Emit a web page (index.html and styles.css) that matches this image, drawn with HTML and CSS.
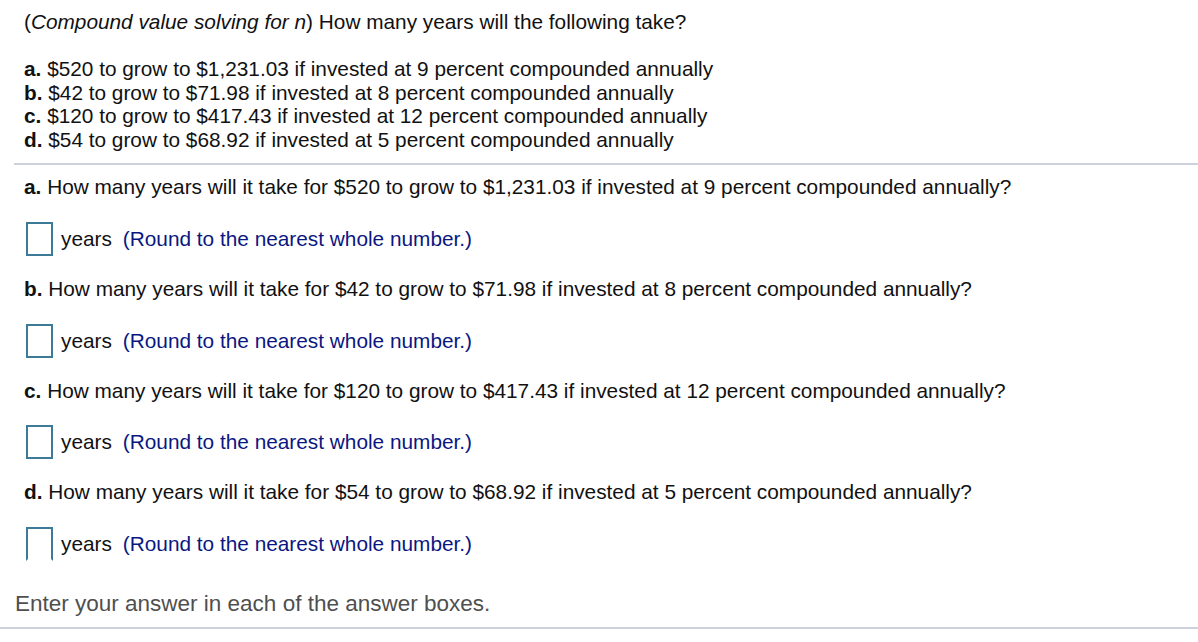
FILE: index.html
```html
<!DOCTYPE html>
<html lang="en">
<head>
<meta charset="utf-8">
<title>Compound value solving for n</title>
<link rel="stylesheet" href="styles.css">
</head>
<body>
<div class="intro">
  <p class="title">(<i>Compound value solving for n</i>) How many years will the following take?</p>
  <ul class="list">
    <li><b>a.</b> $520 to grow to $1,231.03 if invested at 9 percent compounded annually</li>
    <li><b>b.</b> $42 to grow to $71.98 if invested at 8 percent compounded annually</li>
    <li><b>c.</b> $120 to grow to $417.43 if invested at 12 percent compounded annually</li>
    <li><b>d.</b> $54 to grow to $68.92 if invested at 5 percent compounded annually</li>
  </ul>
</div>
<hr class="divider">
<div class="questions">
  <p class="q"><b>a.</b> How many years will it take for $520 to grow to $1,231.03 if invested at 9 percent compounded annually?</p>
  <div class="answer"><span class="box"></span><span class="unit">years</span><span class="hint">(Round to the nearest whole number.)</span></div>
  <p class="q"><b>b.</b> How many years will it take for $42 to grow to $71.98 if invested at 8 percent compounded annually?</p>
  <div class="answer"><span class="box"></span><span class="unit">years</span><span class="hint">(Round to the nearest whole number.)</span></div>
  <p class="q"><b>c.</b> How many years will it take for $120 to grow to $417.43 if invested at 12 percent compounded annually?</p>
  <div class="answer"><span class="box"></span><span class="unit">years</span><span class="hint">(Round to the nearest whole number.)</span></div>
  <p class="q"><b>d.</b> How many years will it take for $54 to grow to $68.92 if invested at 5 percent compounded annually?</p>
  <div class="answer"><span class="box box-open"></span><span class="unit">years</span><span class="hint">(Round to the nearest whole number.)</span></div>
</div>
<p class="footer">Enter your answer in each of the answer boxes.</p>
<hr class="divider divider-full">
</body>
</html>
```
FILE: styles.css
```css
html, body {
  margin: 0;
  padding: 0;
  background: #fff;
}
body {
  font-family: "Liberation Sans", Arial, sans-serif;
  font-size: 20.8px;
  line-height: 23.6px;
  color: #111;
}
.intro {
  padding: 10px 0 0 24px;
}
.title {
  margin: 0;
}
.list {
  list-style: none;
  margin: 23.4px 0 0 0;
  padding: 0;
}
.divider {
  border: 0;
  height: 2px;
  background: #cfd2dc;
  margin: 12px 0 0 14px;
}
.divider-full {
  margin: 11px 0 0 0;
}
.questions {
  padding: 10px 0 0 24px;
}
.q {
  margin: 0;
}
.answer {
  display: flex;
  align-items: center;
  height: 34px;
  margin: 23px 0 21px 2px;
}
.box {
  box-sizing: border-box;
  width: 27px;
  height: 34px;
  border: 2px solid #3c7a98;
  margin-right: 8px;
}
.box-open {
  border-bottom-color: transparent;
}
.unit {
  color: #111;
}
.hint {
  color: #0a1782;
  margin-left: 11px;
}
.footer {
  margin: 31px 0 0 15px;
  font-size: 22.5px;
  line-height: 24px;
  color: #4f4f4f;
}
```
